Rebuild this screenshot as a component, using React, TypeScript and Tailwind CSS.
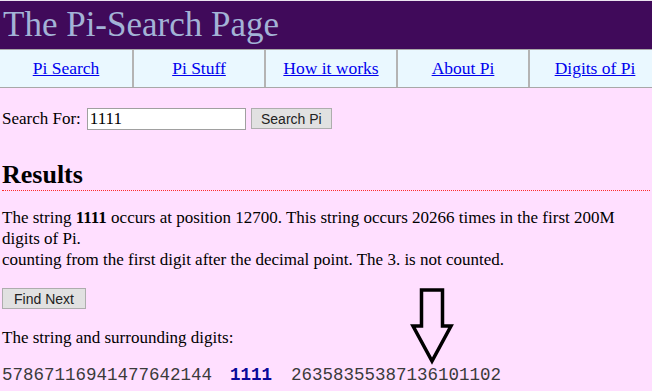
const tabs = ['Pi Search', 'Pi Stuff', 'How it works', 'About Pi', 'Digits of Pi'];

export default function App() {
  return (
    <div className="relative h-[391px] w-[652px] overflow-hidden bg-[#ffdfff] font-['Liberation_Serif',serif] text-[17px] text-black">
      <div className="h-px bg-[#ece4f0]" />
      <header className="h-[48px] bg-[#400a5a] pl-[3px] text-[35px] leading-[48px] text-[#a3b3d6]">
        The Pi-Search Page
      </header>

      <nav className="flex w-[660px] border-y border-[#a8a8a8] bg-[#eaf8ff]">
        {tabs.map((t, i) => (
          <div
            key={t}
            className={
              i > 0
                ? 'flex h-[37px] w-[132px] items-center justify-center border-l-2 border-[#b4b4b4]'
                : 'flex h-[37px] w-[132px] items-center justify-center'
            }
          >
            <a href="#" className="text-[17.5px] text-[#0000ee] underline">
              {t}
            </a>
          </div>
        ))}
      </nav>

      <main className="px-[2px]">
        <div className="mt-[18px] flex items-center">
          <span>Search For:</span>
          <input
            defaultValue="1111"
            className="ml-[6px] h-[22px] w-[159px] border border-[#a0a0a0] bg-white px-[2px] font-['Liberation_Serif',serif] text-[17px] outline-none"
          />
          <button className="ml-[5px] h-[21px] w-[81px] border border-[#adadad] bg-[#e1e1e1] font-['Liberation_Sans',sans-serif] text-[14px] text-[#222]">
            Search Pi
          </button>
        </div>

        {/* dotted rule under the heading */}
        <h2 className="mt-[28px] border-b border-dotted border-[#ff2a2a] text-[26px] font-bold leading-[30px]">
          Results
        </h2>

        <p className="mt-[16px] leading-[21px]">
          The string <b>1111</b> occurs at position 12700. This string occurs 20266 times in the first 200M
          digits of Pi.
          <br />
          counting from the first digit after the decimal point. The 3. is not counted.
        </p>

        <button className="mt-[18px] block h-[21px] w-[84px] border border-[#adadad] bg-[#e1e1e1] font-['Liberation_Sans',sans-serif] text-[14px] text-[#222]">
          Find Next
        </button>

        <p className="mt-[18px] leading-[21px]">The string and surrounding digits:</p>

        <p className="mt-[17px] whitespace-pre font-['Liberation_Mono',monospace] text-[17.5px] leading-[21px] text-[#3a3a3a]">
          57867116941477642144
          <b className="ml-[18px] mr-[19px] text-[#0a0a9a]">1111</b>
          26358355387136101102
        </p>
      </main>

      <svg className="absolute left-[410px] top-[287px]" width="45" height="78" viewBox="0 0 45 78">
        <polygon
          points="11.5,3 32.5,3 32.5,39 41,39 22,74 3,39 11.5,39"
          fill="none"
          stroke="black"
          strokeWidth="3.5"
        />
      </svg>
    </div>
  );
}
